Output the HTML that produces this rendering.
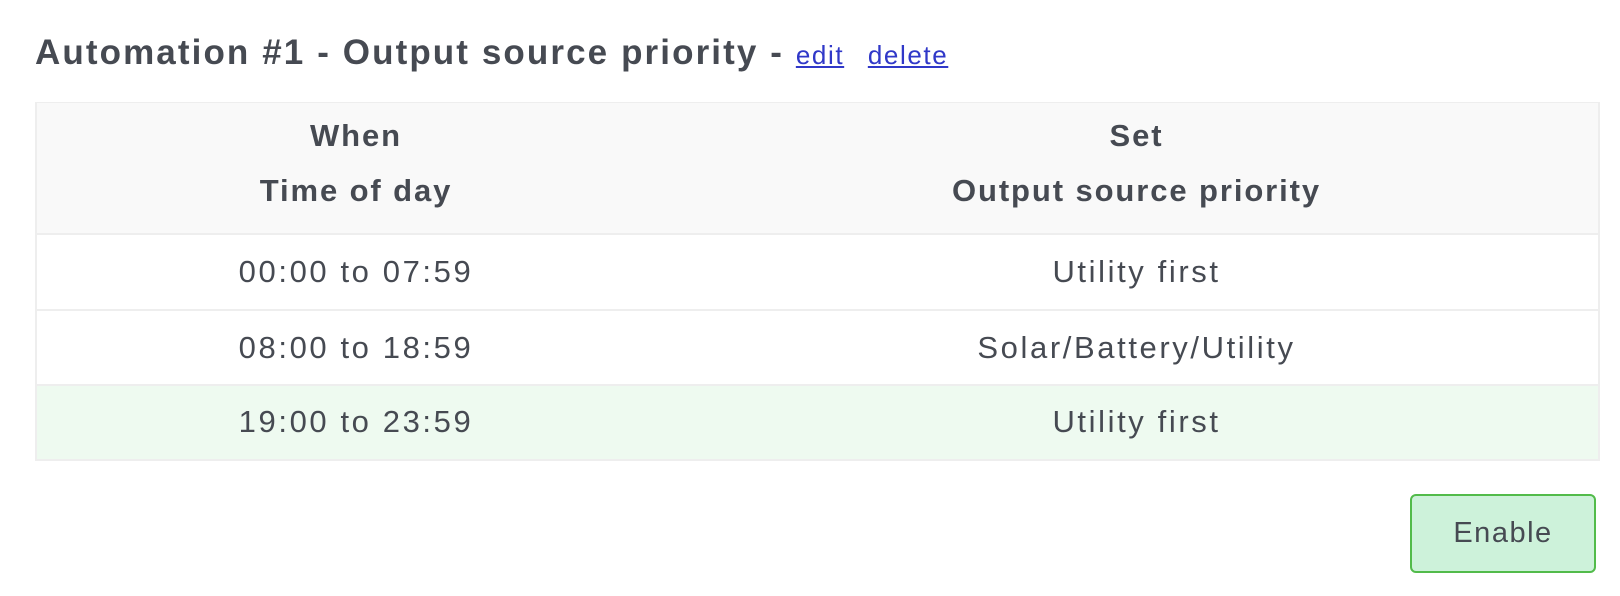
<!DOCTYPE html>
<html><head><style>
html,body{margin:0;padding:0;background:#fff;width:1620px;height:596px;overflow:hidden;font-family:"Liberation Sans",sans-serif;color:#464a52}
.t{position:absolute;left:35px;top:33px;font-size:35px;font-weight:bold;white-space:nowrap;letter-spacing:2.1px}
.t a{color:#3038c8;font-size:26px;text-decoration:underline;font-weight:normal;letter-spacing:1.6px}
.tbl{position:absolute;left:35px;top:102px;width:1561px;height:356px;border:2px solid #eee;border-top:1px solid #eee}
.row{position:absolute;left:0;width:100%;border-top:2px solid #eee;box-sizing:border-box}
.c1,.c2{position:absolute;text-align:center;white-space:nowrap;font-size:31px;letter-spacing:2.6px}
.c1{left:0;width:638px}.c2{left:638px;width:923px}
.hd{font-weight:bold;line-height:55px;top:5px;letter-spacing:1.9px}
.btn{position:absolute;left:1410px;top:494px;width:186px;height:79px;box-sizing:border-box;border:2px solid #52bb4a;border-radius:6px;background:#cdf2da;font-size:29px;text-align:center;line-height:75px;letter-spacing:1.5px}
</style></head><body>
<div class="t">Automation #1 - Output source priority - <a>edit</a>&nbsp; <a>delete</a></div>
<div class="tbl">
<div class="row" style="top:0;height:131px;background:#f9f9f9;border-top:0">
<div class="c1 hd">When<br>Time of day</div><div class="c2 hd">Set<br>Output source priority</div></div>
<div class="row" style="top:130px;height:77px;line-height:73px"><div class="c1">00:00 to 07:59</div><div class="c2">Utility first</div></div>
<div class="row" style="top:206px;height:76px;line-height:73px"><div class="c1">08:00 to 18:59</div><div class="c2">Solar/Battery/Utility</div></div>
<div class="row" style="top:281px;height:75px;line-height:72px;background:#eefaf0"><div class="c1">19:00 to 23:59</div><div class="c2">Utility first</div></div>
</div>
<div class="btn">Enable</div>
</body></html>
